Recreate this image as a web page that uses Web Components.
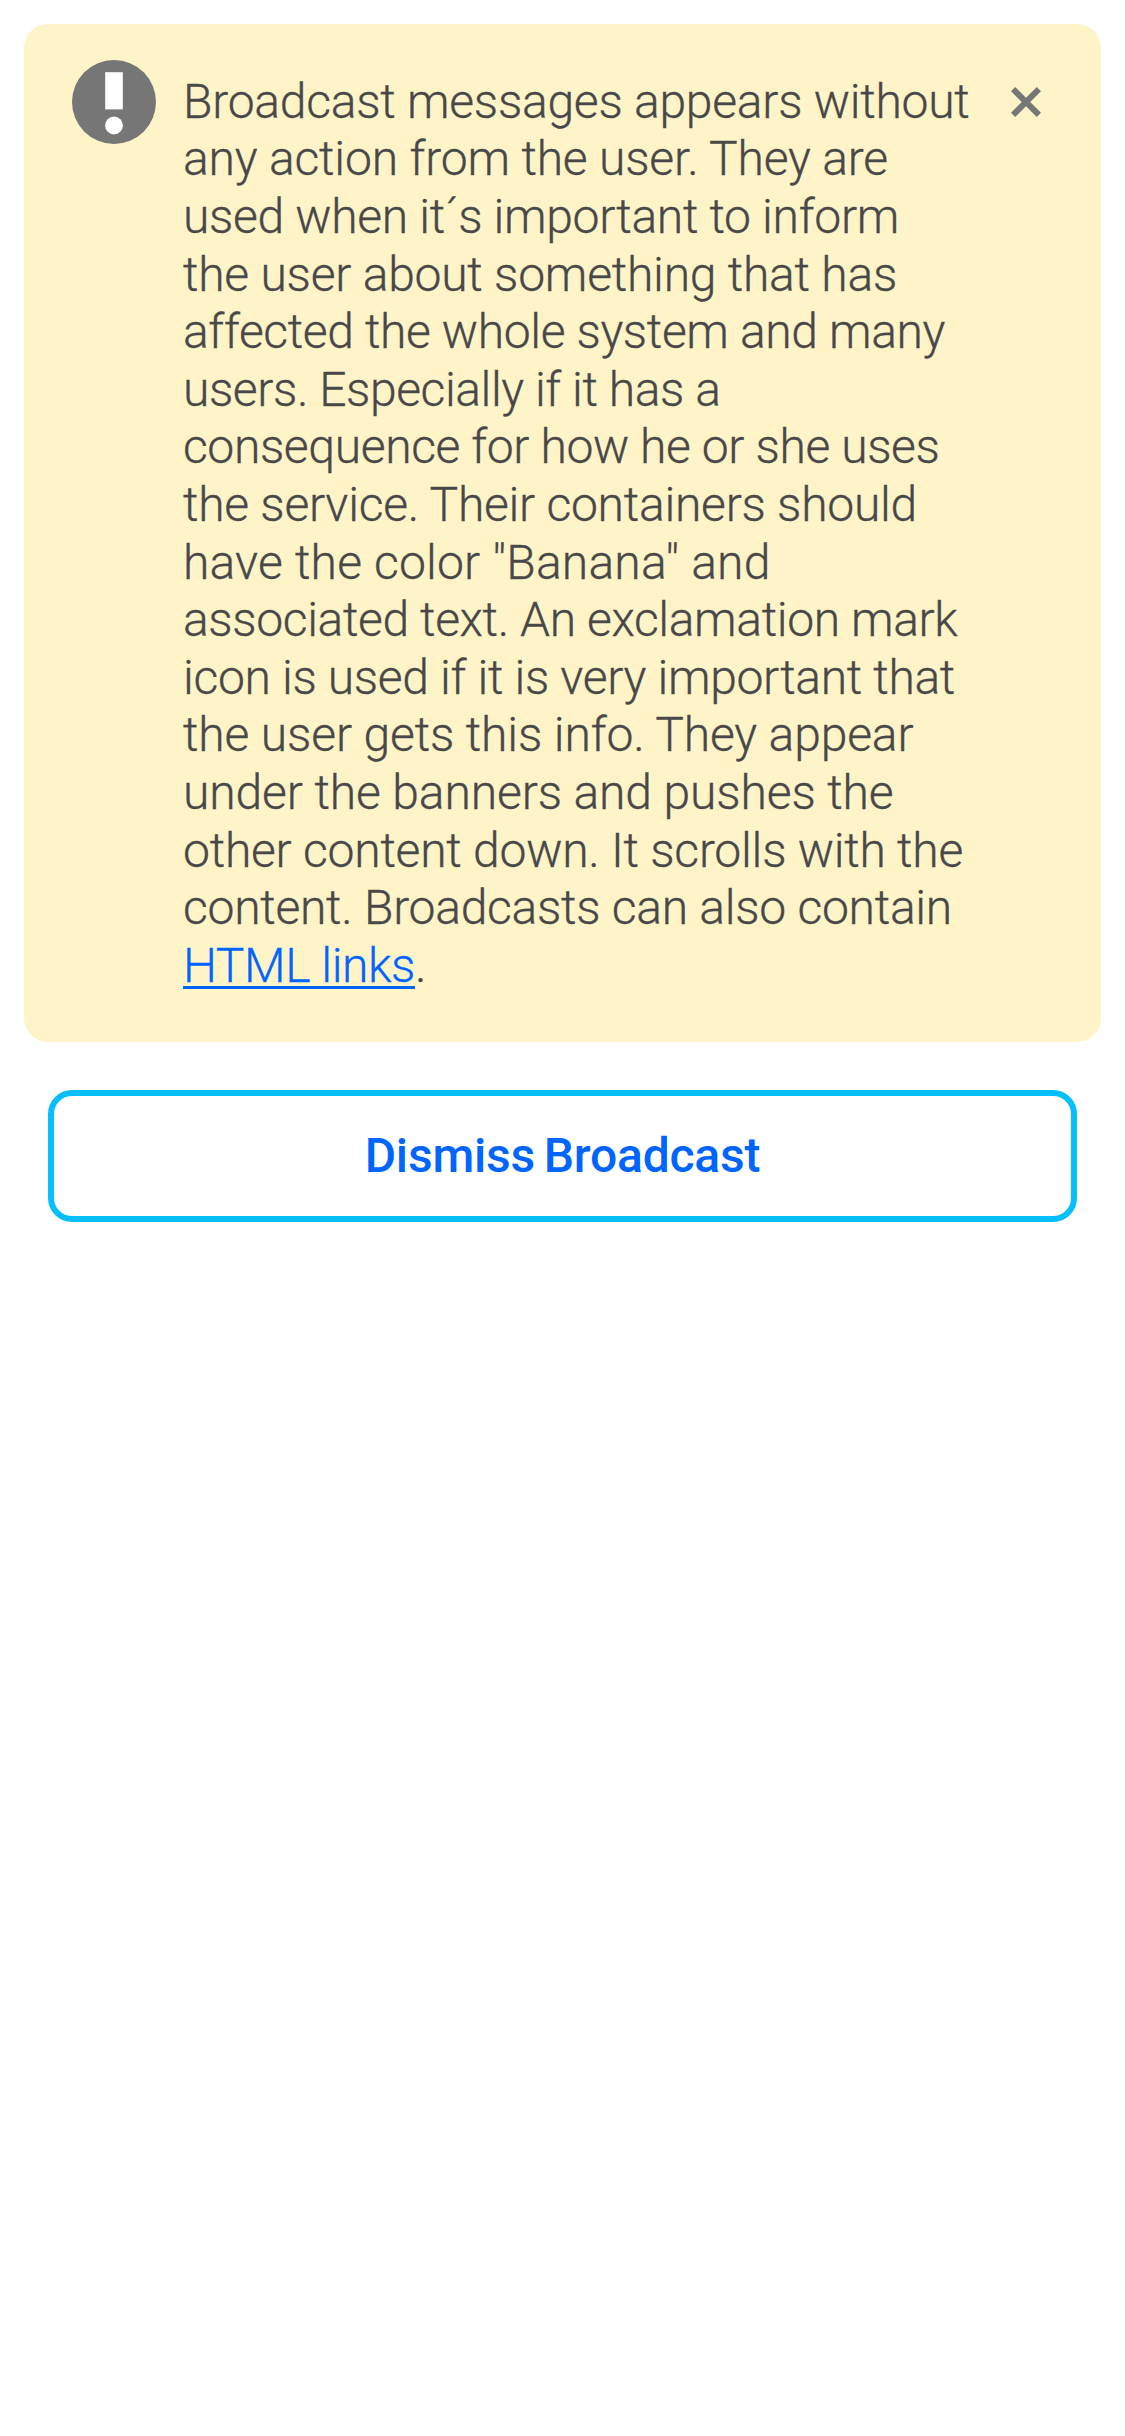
<!DOCTYPE html>
<html lang="en">
<head>
<meta charset="utf-8">
<title>Broadcast</title>
<style>
  body { margin: 0; background: #fff; font-family: Roboto, "Liberation Sans", sans-serif; color: #484848; }
</style>
</head>
<body>
<broadcast-page>
  <broadcast-message>
    <text-line fit="786.5">Broadcast messages appears without</text-line>
    <text-line fit="705">any action from the user. They are</text-line>
    <text-line fit="716">used when it´s important to inform</text-line>
    <text-line fit="714">the user about something that has</text-line>
    <text-line fit="762">affected the whole system and many</text-line>
    <text-line fit="537.5">users. Especially if it has a</text-line>
    <text-line fit="756.5">consequence for how he or she uses</text-line>
    <text-line fit="734">the service. Their containers should</text-line>
    <text-line fit="587.5">have the color "Banana" and</text-line>
    <text-line fit="774.5">associated text. An exclamation mark</text-line>
    <text-line fit="772">icon is used if it is very important that</text-line>
    <text-line fit="730.5">the user gets this info. They appear</text-line>
    <text-line fit="710.5">under the banners and pushes the</text-line>
    <text-line fit="780">other content down. It scrolls with the</text-line>
    <text-line fit="769">content. Broadcasts can also contain</text-line>
    <text-line fit="243"><text-link>HTML links</text-link>.</text-line>
  </broadcast-message>
  <outline-button><text-line fit="395.5">Dismiss Broadcast</text-line></outline-button>
</broadcast-page>
<script>
const define = (name, html, connected) => {
  const template = document.createElement('template');
  template.innerHTML = html;
  customElements.define(name, class extends HTMLElement {
    constructor() {
      super();
      this.attachShadow({ mode: 'open' }).append(template.content.cloneNode(true));
    }
    connectedCallback() { if (connected) connected(this); }
  });
};

define('broadcast-page', `
  <style>
    :host { display: flex; flex-direction: column; gap: 48px; box-sizing: border-box; min-height: 2436px; padding: 24px; }
  </style><slot></slot>`);

define('alert-icon', `
  <style>:host { display: block; width: 84px; height: 84px; } svg { display: block; }</style>
  <svg width="84" height="84" viewBox="0 0 84 84">
    <circle cx="42" cy="42" r="42" fill="#767676"/>
    <rect x="33.2" y="12.2" width="17.6" height="37.2" fill="#fff"/>
    <circle cx="42" cy="65.5" r="8.9" fill="#fff"/>
  </svg>`);

define('close-icon', `
  <style>:host { display: block; width: 30px; height: 30px; } svg { display: block; }</style>
  <svg width="30" height="30" viewBox="0 0 30 30">
    <path d="M2.1 2.1 27.9 27.9M27.9 2.1 2.1 27.9" fill="none" stroke="#767676" stroke-width="5.9"/>
  </svg>`);

define('broadcast-message', `
  <style>
    :host { display: flex; align-items: flex-start; box-sizing: border-box; height: 1018px; padding: 48px 60px 48px 48px; border-radius: 24px; background: #fff4c8; }
    alert-icon { flex: none; margin-top: -12px; }
    close-icon { flex: none; margin-top: 15px; }
    .text { flex: 1; min-width: 0; margin: 0.8px 0 0 27px; font-size: 48px; font-weight: 300; line-height: 57.6px; -webkit-text-stroke: 0.3px currentcolor; }
  </style>
  <alert-icon></alert-icon>
  <div class="text"><slot></slot></div>
  <close-icon></close-icon>`);

define('text-link', `
  <style>
    :host { display: inline; color: #0064ff; text-decoration: underline; text-decoration-thickness: 3px; text-underline-offset: 4px; text-decoration-skip-ink: none; -webkit-text-stroke: 0.3px #0064ff; }
  </style><slot></slot>`);

define('outline-button', `
  <style>
    :host { display: block; margin: 0 24px; }
    button { display: flex; align-items: center; justify-content: center; box-sizing: border-box; width: 100%; height: 132px; margin: 0; padding: 0; border: 6px solid #06bfff; border-radius: 24px; background: #fff; color: #0064ff; font: 500 48px/58px Roboto, "Liberation Sans", sans-serif; word-spacing: -3px; }
  </style><button type="button"><slot></slot></button>`);

// A single line of text whose tracking is adjusted so that it is "fit" pixels wide.
define('text-line', `
  <style>:host { display: block; width: max-content; white-space: nowrap; }</style><slot></slot>`,
  line => {
    const target = Number(line.getAttribute('fit'));
    const natural = line.getBoundingClientRect().width;
    line.style.letterSpacing = (target - natural) / line.textContent.length + 'px';
  });
</script>
</body>
</html>
